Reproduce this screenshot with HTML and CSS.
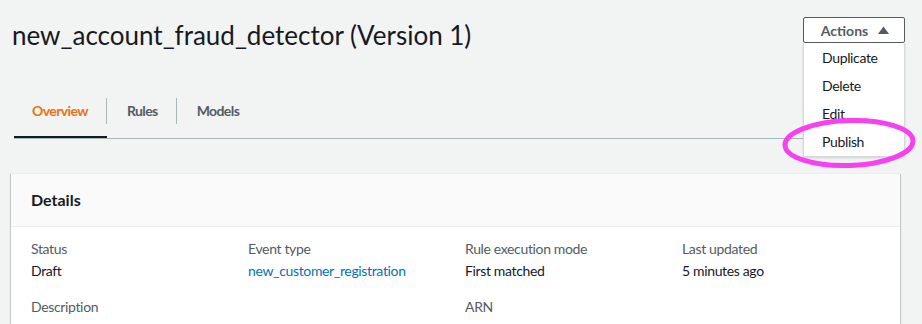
FILE: index.html
```html
<!DOCTYPE html>
<html lang="en">
<head>
  <meta charset="UTF-8">
  <meta name="viewport" content="width=device-width, initial-scale=1.0">
  <title>new_account_fraud_detector (Version 1)</title>
  <link rel="stylesheet" href="styles.css">
</head>
<body>
  <div class="page">
    <div class="page-header">
      <h1>new_account_fraud_detector (Version 1)</h1>
      <div class="actions">
        <button class="actions-button" type="button">
          Actions
          <svg class="caret" width="11" height="8" viewBox="0 0 11 8"><path d="M0 8 L5.5 0.5 L11 8 Z" fill="#545b64"/></svg>
        </button>
        <ul class="actions-menu">
          <li>Duplicate</li>
          <li>Delete</li>
          <li>Edit</li>
          <li>Publish</li>
        </ul>
        <svg class="highlight" width="140" height="60" viewBox="0 0 140 60">
          <ellipse cx="68" cy="28" rx="64" ry="22.5" fill="none" stroke="#f740ef" stroke-width="5" transform="rotate(-2 68 28)"/>
        </svg>
      </div>
    </div>

    <div class="tabs">
      <div class="tab active"><span class="tab-label">Overview</span></div>
      <div class="tab"><span class="tab-label">Rules</span></div>
      <div class="tab"><span class="tab-label last">Models</span></div>
    </div>

    <div class="card">
      <div class="card-header">
        <h2>Details</h2>
      </div>
      <div class="card-body">
        <div class="field">
          <div class="field-label">Status</div>
          <div class="field-value">Draft</div>
        </div>
        <div class="field">
          <div class="field-label">Event type</div>
          <div class="field-value"><a href="#">new_customer_registration</a></div>
        </div>
        <div class="field">
          <div class="field-label">Rule execution mode</div>
          <div class="field-value">First matched</div>
        </div>
        <div class="field">
          <div class="field-label">Last updated</div>
          <div class="field-value">5 minutes ago</div>
        </div>
        <div class="field wide">
          <div class="field-label">Description</div>
        </div>
        <div class="field">
          <div class="field-label">ARN</div>
        </div>
      </div>
    </div>
  </div>
</body>
</html>
```

FILE: styles.css
```css
body {
  margin: 0;
  background-color: #f2f3f3;
  font-family: Lato, 'Liberation Sans', sans-serif;
  font-size: 14px;
  letter-spacing: -0.35px;
  color: #16191f;
  overflow: hidden;
}
.page {
  padding: 17px 17px 0 12px;
}
.page-header {
  display: flex;
  justify-content: space-between;
  align-items: flex-start;
}
.page-header h1 {
  margin: 2px 0 0 0;
  font-size: 26px;
  font-weight: 400;
  line-height: 32px;
  letter-spacing: 0;
  color: #16191f;
}
.actions {
  position: relative;
  width: 102px;
}
.actions-button {
  display: flex;
  align-items: center;
  justify-content: center;
  gap: 10px;
  width: 102px;
  height: 26px;
  padding: 0 0 0 2px;
  background-color: #fff;
  border: 1px solid #545b64;
  border-radius: 2px;
  font-family: inherit;
  font-size: 14px;
  font-weight: 700;
  letter-spacing: 0;
  color: #545b64;
}
.caret {
  margin-top: -1px;
}
.actions-menu {
  position: absolute;
  top: 26px;
  left: 0;
  width: 100px;
  margin: 0;
  padding: 1px 0 0 0;
  list-style: none;
  background-color: #fff;
  border: 1px solid #d5dbdb;
  border-top: none;
  box-shadow: 0 1px 2px rgba(0, 28, 36, 0.15);
  z-index: 2;
}
.actions-menu li {
  padding: 0 0 0 18px;
  line-height: 28px;
  color: #16191f;
}
.highlight {
  position: absolute;
  top: 98px;
  left: -22px;
  z-index: 3;
}
.tabs {
  display: flex;
  margin: 47px 5px 0 2px;
  border-bottom: 1px solid #aab7b8;
}
.tab {
  padding-bottom: 12px;
  border-bottom: 2px solid transparent;
}
.tab.active {
  border-bottom-color: #16191f;
}
.tab-label {
  display: block;
  padding: 0 18px 0 20px;
  line-height: 26px;
  font-weight: 700;
  letter-spacing: -0.6px;
  color: #545b64;
  border-right: 1px solid #aab7b8;
}
.tab.active .tab-label {
  padding-left: 18px;
  color: #ec7211;
}
.tab-label.last {
  border-right: none;
}
.card {
  margin: 34px 5px 0 -1px;
  background-color: #fff;
  border-top: 1px solid #eaeded;
  box-shadow: 0 1px 1px 0 rgba(0, 28, 36, 0.3), 1px 1px 1px 0 rgba(0, 28, 36, 0.15), -1px 1px 1px 0 rgba(0, 28, 36, 0.15);
}
.card-header {
  background-color: #fafafa;
  border-bottom: 1px solid #eaeded;
  padding: 0 20px;
}
.card-header h2 {
  margin: 0;
  font-size: 16px;
  font-weight: 700;
  line-height: 52px;
  letter-spacing: 0;
}
.card-body {
  display: grid;
  grid-template-columns: repeat(4, 217px);
  row-gap: 14px;
  padding: 11px 0 20px 20px;
}
.field.wide {
  grid-column: span 2;
}
.field-label {
  line-height: 22px;
  color: #545b64;
}
.field-value {
  line-height: 22px;
}
.field-value a {
  color: #0073bb;
  text-decoration: none;
}
```
